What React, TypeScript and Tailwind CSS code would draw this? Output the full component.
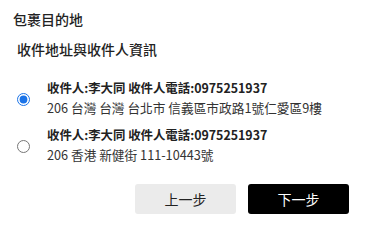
import { useState } from "react";

const ADDRESSES = [
  {
    id: 1,
    name: "李大同",
    phone: "0975251937",
    address: "206 台灣 台灣 台北市 信義區市政路1號仁愛區9樓",
  },
  {
    id: 2,
    name: "李大同",
    phone: "0975251937",
    address: "206 香港 新健街 111-10443號",
  },
];

export default function App() {
  const [selected, setSelected] = useState(1);

  return (
    <div
      className="w-[389px] h-[233px] bg-white text-[#222] overflow-hidden"
      style={{ fontFamily: '"Noto Sans CJK TC", "Noto Sans", sans-serif' }}
    >
      <div className="pl-[13px] pt-[9px]">
        <h2 className="text-[14px] leading-[20px] font-medium">包裹目的地</h2>
      </div>
      <div className="pl-[17px] pt-[10px]">
        <h3 className="text-[14px] leading-[20px] font-medium">收件地址與收件人資訊</h3>
      </div>

      {/* Address list */}
      <div className="mt-[20px] flex flex-col gap-[9px]">
        {ADDRESSES.map((a) => (
          <label key={a.id} className="flex items-center pl-[17px] cursor-pointer">
            <input
              type="radio"
              name="address"
              checked={selected === a.id}
              onChange={() => setSelected(a.id)}
              className="w-[13px] h-[13px] m-0 mt-[3px] accent-[#1a73e8]"
            />
            <div className="ml-[17px] flex flex-col">
              <span className="text-[12.4px] leading-[19px] font-bold">
                收件人:{a.name} 收件人電話:{a.phone}
              </span>
              <span className="text-[12.7px] leading-[19px] text-[#333]">{a.address}</span>
            </div>
          </label>
        ))}
      </div>

      {/* Actions */}
      <div className="mt-[20px] flex justify-end gap-[12px] pr-[40px]">
        <button className="w-[101px] h-[30px] rounded-[3px] bg-[#ebebeb] text-[14px] text-[#222]">
          上一步
        </button>
        <button className="w-[101px] h-[30px] rounded-[3px] bg-black text-[14px] text-white">
          下一步
        </button>
      </div>
    </div>
  );
}
